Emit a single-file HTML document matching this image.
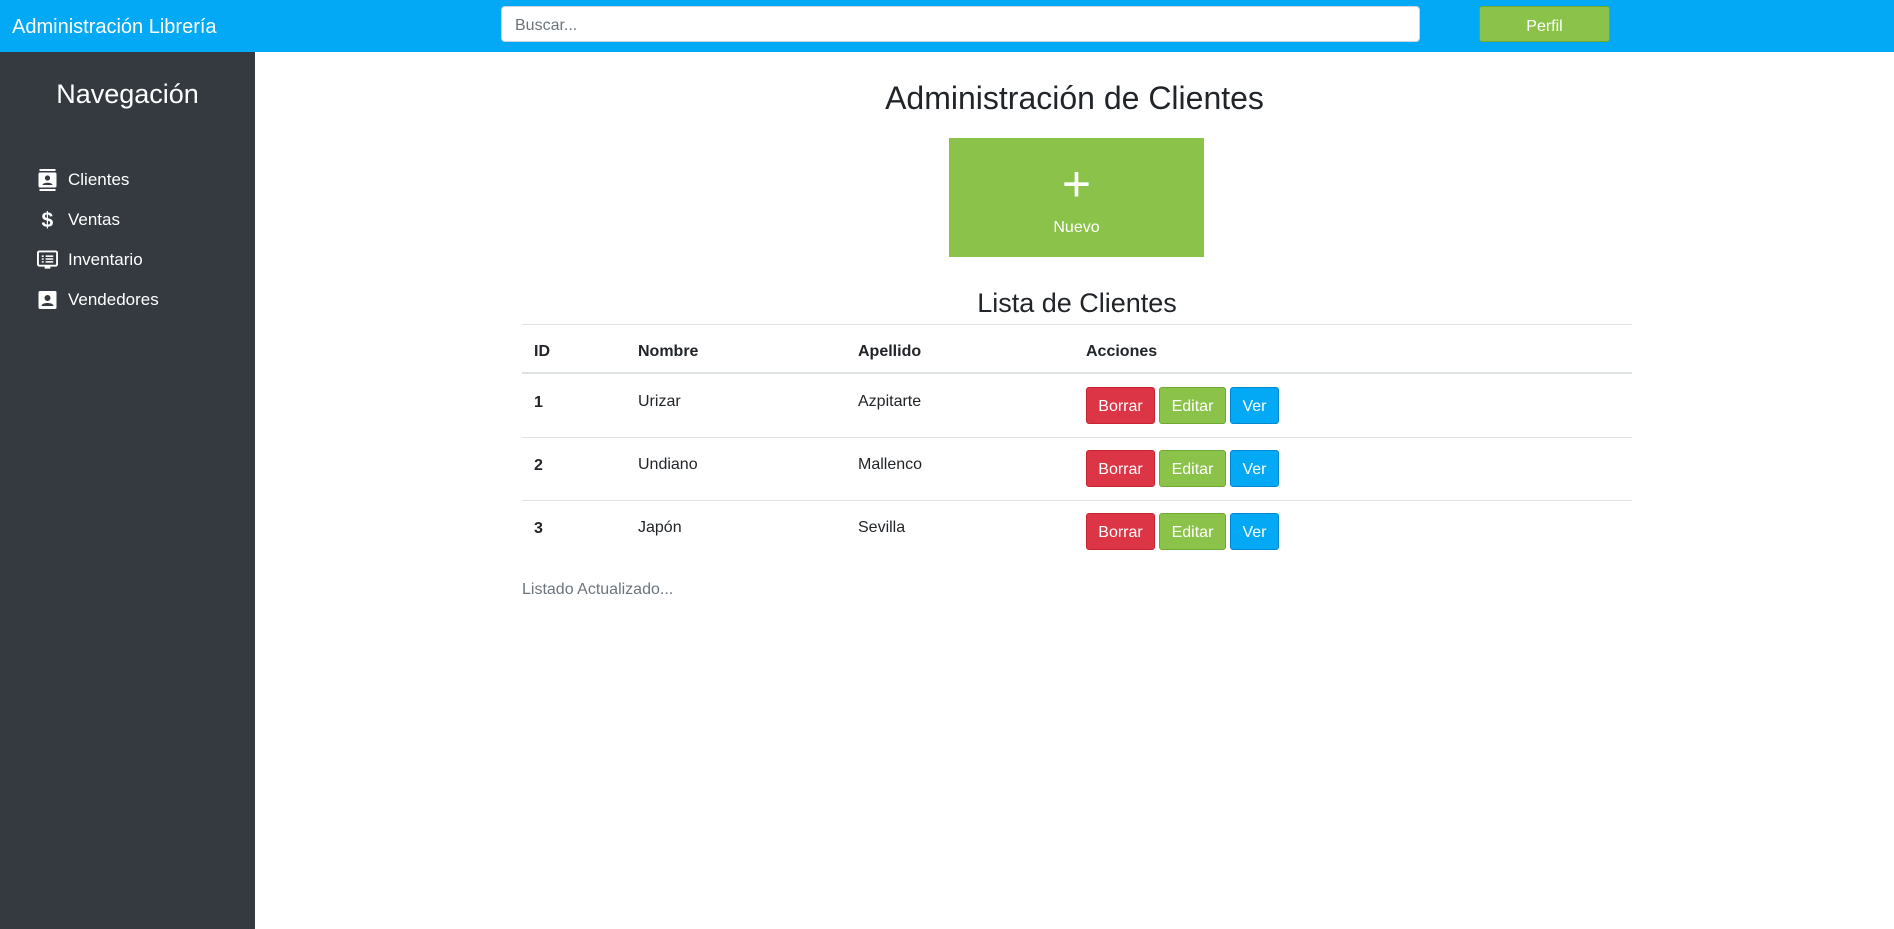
<!DOCTYPE html>
<html><head><meta charset="utf-8"><style>
*{box-sizing:border-box;margin:0;padding:0}
body{width:1894px;height:929px;overflow:hidden;font-family:"Liberation Sans",sans-serif;color:#212529;background:#fff;position:relative}
.hdr{position:absolute;left:0;top:0;width:1894px;height:52px;background:#03a9f4}
.brand{position:absolute;left:12px;top:16px;color:#fff;font-size:20px}
.search{position:absolute;left:501px;top:6px;width:919px;height:36px;background:#fff;border:1px solid #ced4da;border-radius:4px;font-size:16px;color:#6c757d;padding:10px 13px}
.perfil{position:absolute;left:1479px;top:6px;width:131px;height:36px;background:#8bc34a;border:1px solid #6fa833;border-radius:3px;color:#fff;font-size:16px;text-align:center;line-height:40px}
.side{position:absolute;left:0;top:52px;width:255px;height:877px;background:#343a40;color:#fff}
.side h2{position:absolute;left:0;width:255px;top:27px;text-align:center;font-weight:normal;font-size:27px}
.nav{position:absolute;left:37px;font-size:17px;display:flex;align-items:center}
.nav svg{width:21px;height:22px;margin-right:10px}
h1{position:absolute;left:255px;width:1639px;top:80px;text-align:center;font-weight:normal;font-size:32px}
.nuevo{position:absolute;left:949px;top:138px;width:255px;height:119px;background:#8bc34a;color:#fff;text-align:center}
.nuevo .p{font-size:50px;line-height:50px;margin-top:21px;font-weight:300}
.nuevo .t{font-size:16px;margin-top:10px}
h3{position:absolute;left:522px;width:1110px;top:288px;text-align:center;font-weight:normal;font-size:27px}
.tb{position:absolute;left:522px;width:1110px;border-top:1px solid #dee2e6}
.c{position:absolute;font-size:16px}
.b{position:absolute;height:37px;border-radius:3px;color:#fff;font-size:16px;text-align:center;line-height:37px}
.r{background:#dc3545;border:1px solid #c82333}.g{background:#8bc34a;border:1px solid #6fa833}.v{background:#03a9f4;border:1px solid #0288d1}
</style></head><body>
<div class="hdr"><div class="brand">Administración Librería</div><div class="search">Buscar...</div><div class="perfil">Perfil</div></div>
<div class="side"><h2>Navegación</h2>
<div class="nav" style="top:117px"><svg viewBox="0 0 20 22"><rect x="2" y="0" width="16" height="2" fill="#fff"/><rect x="2" y="20" width="16" height="2" fill="#fff"/><rect x="1" y="3.5" width="18" height="15" rx="1.5" fill="#fff"/><circle cx="10" cy="9" r="2.6" fill="#343a40"/><path d="M5 16c0-3 10-3 10 0z" fill="#343a40"/></svg>Clientes</div>
<div class="nav" style="top:157px"><svg viewBox="0 0 20 22"><text x="4" y="18" font-size="21" font-weight="bold" fill="#fff" font-family="Liberation Sans">$</text></svg>Ventas</div>
<div class="nav" style="top:197px"><svg viewBox="0 0 22 22"><rect x="1" y="2" width="20" height="15" rx="1.5" fill="none" stroke="#fff" stroke-width="2"/><rect x="8" y="17" width="6" height="3" fill="#fff"/><path d="M5 7h2M9 7h8M5 10h2M9 10h8M5 13h2M9 13h8" stroke="#fff" stroke-width="1.6"/></svg>Inventario</div>
<div class="nav" style="top:237px"><svg viewBox="0 0 20 22"><rect x="1" y="2" width="18" height="18" rx="1.5" fill="#fff"/><circle cx="10" cy="9" r="3" fill="#343a40"/><path d="M4 17c0-4 12-4 12 0z" fill="#343a40"/></svg>Vendedores</div>
</div>
<h1>Administración de Clientes</h1>
<div class="nuevo"><div class="p">+</div><div class="t">Nuevo</div></div>
<h3>Lista de Clientes</h3>
<div class="tb" style="top:324px"></div>
<div class="tb" style="top:372px;border-top:2px solid #dee2e6"></div>
<div class="tb" style="top:437px"></div>
<div class="tb" style="top:500px"></div>
<div class="c" style="left:534px;top:343px;font-weight:bold">ID</div>
<div class="c" style="left:638px;top:343px;font-weight:bold">Nombre</div>
<div class="c" style="left:858px;top:343px;font-weight:bold">Apellido</div>
<div class="c" style="left:1086px;top:343px;font-weight:bold">Acciones</div>

<div class="c" style="left:534px;top:394px;font-weight:bold">1</div><div class="c" style="left:638px;top:393px">Urizar</div><div class="c" style="left:858px;top:393px">Azpitarte</div>
<div class="b r" style="left:1086px;top:387px;width:69px">Borrar</div><div class="b g" style="left:1159px;top:387px;width:67px">Editar</div><div class="b v" style="left:1230px;top:387px;width:49px">Ver</div>

<div class="c" style="left:534px;top:457px;font-weight:bold">2</div><div class="c" style="left:638px;top:456px">Undiano</div><div class="c" style="left:858px;top:456px">Mallenco</div>
<div class="b r" style="left:1086px;top:450px;width:69px">Borrar</div><div class="b g" style="left:1159px;top:450px;width:67px">Editar</div><div class="b v" style="left:1230px;top:450px;width:49px">Ver</div>

<div class="c" style="left:534px;top:520px;font-weight:bold">3</div><div class="c" style="left:638px;top:519px">Japón</div><div class="c" style="left:858px;top:519px">Sevilla</div>
<div class="b r" style="left:1086px;top:513px;width:69px">Borrar</div><div class="b g" style="left:1159px;top:513px;width:67px">Editar</div><div class="b v" style="left:1230px;top:513px;width:49px">Ver</div>

<div class="c" style="left:522px;top:581px;color:#6c757d">Listado Actualizado...</div>
</body></html>
